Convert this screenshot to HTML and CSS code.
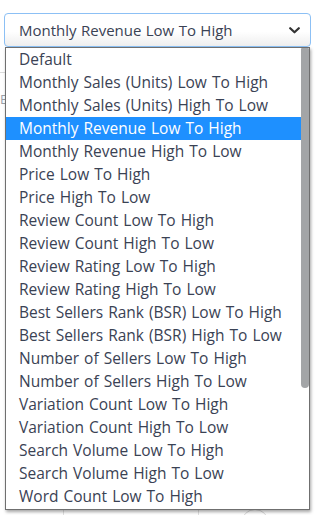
FILE: index.html
```html
<!DOCTYPE html>
<html>
<head>
<meta charset="utf-8">
<link rel="stylesheet" href="styles.css">
</head>
<body>
<div class="page">
  <div class="edge-line"></div>
  <div class="edge-letter">E</div>
  <div class="select">
    <span class="select-value">Monthly Revenue Low To High</span>
    <svg class="chevron" width="11" height="7" viewBox="0 0 11 7"><path d="M1.2 1.2 L5.5 5.3 L9.8 1.2" fill="none" stroke="#333" stroke-width="2.2" stroke-linecap="round" stroke-linejoin="round"/></svg>
  </div>
  <div class="listbox">
    <ul class="options">
      <li>Default</li>
      <li>Monthly Sales (Units) Low To High</li>
      <li>Monthly Sales (Units) High To Low</li>
      <li class="selected">Monthly Revenue Low To High</li>
      <li>Monthly Revenue High To Low</li>
      <li>Price Low To High</li>
      <li>Price High To Low</li>
      <li>Review Count Low To High</li>
      <li>Review Count High To Low</li>
      <li>Review Rating Low To High</li>
      <li>Review Rating High To Low</li>
      <li>Best Sellers Rank (BSR) Low To High</li>
      <li>Best Sellers Rank (BSR) High To Low</li>
      <li>Number of Sellers Low To High</li>
      <li>Number of Sellers High To Low</li>
      <li>Variation Count Low To High</li>
      <li>Variation Count High To Low</li>
      <li>Search Volume Low To High</li>
      <li>Search Volume High To Low</li>
      <li>Word Count Low To High</li>
    </ul>
    <div class="scrolltrack"><div class="thumb"></div></div>
  </div>
  <div class="under">
    <div class="cell c1"></div>
    <div class="cell c2"></div>
    <div class="cell c3"><div class="circle"></div></div>
  </div>
</div>
</body>
</html>
```
FILE: styles.css
```css
html, body {
  margin: 0;
  padding: 0;
  background: #ffffff;
}
body {
  font-family: "Open Sans", "Lato", sans-serif;
  color: #3a4254;
  overflow: hidden;
}
.page {
  position: relative;
  width: 316px;
  height: 515px;
  padding-top: 13px;
  box-sizing: border-box;
}
.edge-line {
  position: absolute;
  left: 0;
  top: 72px;
  width: 5px;
  height: 1px;
  background: #dcdcdc;
}
.edge-letter {
  position: absolute;
  left: 0;
  top: 91px;
  font-size: 13px;
  line-height: 16px;
  color: #9aa0a8;
  z-index: 1;
}
.select {
  margin: 0 5px 0 4px;
  height: 34px;
  box-sizing: border-box;
  border: 1px solid #8cc0f5;
  border-radius: 4px;
  background: linear-gradient(to bottom, #ffffff 0%, #ffffff 55%, #eeeeee 100%);
  display: flex;
  align-items: center;
  justify-content: space-between;
  padding: 0 10px 0 14px;
}
.select-value {
  font-size: 15px;
  word-spacing: 0.5px;
  color: #3a4254;
}
.chevron {
  display: block;
  margin-top: 1px;
}
.listbox {
  position: relative;
  z-index: 2;
  margin: 0 6px 0 5px;
  height: 463px;
  box-sizing: border-box;
  border: 1px solid #6f6f6f;
  background: #ffffff;
  box-shadow: 1px 2px 3px rgba(0,0,0,0.35);
  display: flex;
}
.options {
  list-style: none;
  margin: 0;
  padding: 0;
  flex: 1;
}
.options li {
  height: 23px;
  line-height: 22px;
  padding-left: 13px;
  font-size: 15.5px;
  word-spacing: 1px;
  white-space: nowrap;
  color: #3a4254;
}
.options li.selected {
  background: #1e90ff;
  color: #ffffff;
}
.scrolltrack {
  width: 8px;
  background: #ffffff;
}
.thumb {
  height: 340px;
  background: #a3a5a7;
  border-radius: 1px 1px 4px 4px;
}
.under {
  display: flex;
  height: 10px;
  margin-top: -3px;
}
.cell {
  height: 10px;
}
.c1 { width: 63px; border-right: 1px solid #e0e0e0; }
.c2 { width: 134px; border-right: 1px solid #e0e0e0; }
.c3 { flex: 1; position: relative; }
.circle {
  position: absolute;
  left: 42px;
  top: 2px;
  width: 26px;
  height: 26px;
  border: 1px solid #d8d8d8;
  border-radius: 50%;
}
```
